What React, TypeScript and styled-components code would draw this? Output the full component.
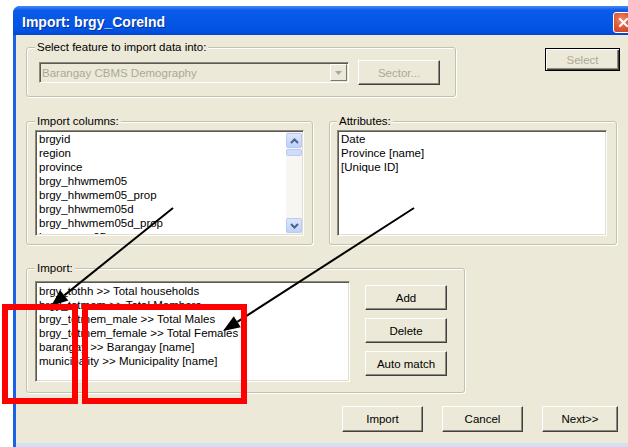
import React from 'react';
import styled, { createGlobalStyle, css } from 'styled-components';

const GlobalStyle = createGlobalStyle`
  html, body {
    margin: 0;
    padding: 0;
    background: #fff;
  }
  body {
    font-family: "Liberation Sans", Arial, sans-serif;
    font-size: 11.5px;
    overflow: hidden;
  }
`;

const Page = styled.div`
  position: relative;
  box-sizing: border-box;
  width: 628px;
  height: 447px;
  padding: 6px 0 0 13px;
  overflow: hidden;
`;

const Window = styled.div`
  width: 629px;
  height: 441px;
  display: flex;
  flex-direction: column;
  background: #1a62e6;
  border-radius: 7px 7px 0 0;
  overflow: hidden;
`;

const TitleBar = styled.div`
  box-sizing: border-box;
  height: 29px;
  flex: none;
  display: flex;
  align-items: center;
  justify-content: space-between;
  padding: 3px 8px 0 9px;
  background: linear-gradient(#4a8cf6 0, #0c5ce9 4px, #0757e7 50%, #0252e2 85%, #0046d4 100%);
`;

const Title = styled.span`
  font-size: 14px;
  font-weight: bold;
  color: #fff;
  text-shadow: 1px 1px 0 #0a2f9a;
`;

const CloseButton = styled.div`
  box-sizing: border-box;
  width: 21px;
  height: 21px;
  display: flex;
  align-items: center;
  justify-content: center;
  border: 1px solid #fff;
  border-radius: 3px;
  background: radial-gradient(circle at 40% 35%, #f08a6a 0, #e05a36 45%, #c53d1c 100%);
`;

const Client = styled.div`
  flex: 1;
  display: flex;
  flex-direction: column;
  margin: 0 3px;
  padding: 5px 19px 0 10px;
  background: #ece9d8;
  border-bottom: 4px solid #d3dff2;
`;

const Row = styled.div<{ $top?: number; $justify?: string }>`
  display: flex;
  align-items: flex-start;
  justify-content: ${p => p.$justify ?? 'flex-start'};
  margin-top: ${p => p.$top ?? 0}px;
`;

const Group = styled.fieldset<{ $w: number; $pad: string }>`
  box-sizing: border-box;
  width: ${p => p.$w}px;
  min-width: 0;
  margin: 0;
  padding: ${p => p.$pad};
  border: 1px solid #c4c1b0;
  border-radius: 3px;
  box-shadow: inset 1px 1px 0 #fff, 1px 1px 0 #fff;
`;

const Legend = styled.legend`
  padding: 0 2px;
  line-height: 14px;
  color: #000;
  background: #ece9d8;
`;

const Inline = styled.div<{ $indent?: number }>`
  display: flex;
  align-items: center;
  padding-left: ${p => p.$indent ?? 0}px;
`;

const ComboBox = styled.div`
  box-sizing: border-box;
  width: 310px;
  height: 21px;
  display: flex;
  align-items: center;
  justify-content: space-between;
  padding: 1px 1px 1px 2px;
  background: #ece9d8;
  border: 1px solid;
  border-color: #8d8a7d #fff #fff #8d8a7d;
  box-shadow: inset 1px 1px 0 #5a5950;
  color: #aca899;
`;

const ComboArrow = styled.div`
  box-sizing: border-box;
  width: 17px;
  height: 17px;
  display: flex;
  align-items: center;
  justify-content: center;
  border: 1px solid;
  border-color: #fff #7a786d #7a786d #fff;
`;

const Button = styled.button<{ $w: number; $h?: number; $default?: boolean }>`
  box-sizing: border-box;
  flex: none;
  width: ${p => p.$w}px;
  height: ${p => p.$h ?? 25}px;
  padding: 0;
  font: 11.5px "Liberation Sans", Arial, sans-serif;
  color: #000;
  background: #ece9d8;
  border: 1px solid;
  border-color: #fff #404040 #404040 #fff;
  box-shadow: inset -1px -1px 0 #8d8a7d;
  &:disabled {
    color: #aca899;
  }
  ${p =>
    p.$default &&
    css`
      border-color: #000;
      box-shadow: inset 1px 1px 0 #fff, inset -1px -1px 0 #404040, inset -2px -2px 0 #8d8a7d;
    `}
`;

const ListBox = styled.div<{ $w?: number; $h: number }>`
  box-sizing: border-box;
  display: flex;
  width: ${p => (p.$w ? `${p.$w}px` : '100%')};
  height: ${p => p.$h}px;
  flex: none;
  background: #fff;
  border: 1px solid;
  border-color: #8d8a7d #fff #fff #8d8a7d;
  box-shadow: inset 1px 1px 0 #5a5950, inset -1px -1px 0 #e2dfd0;
  padding: 1px;
`;

const ListItems = styled.div<{ $top?: number }>`
  flex: 1;
  overflow: hidden;
  padding: ${p => p.$top ?? 0}px 0 0 2px;
`;

const ListItem = styled.div`
  line-height: 14px;
  white-space: nowrap;
  color: #000;
`;

const ScrollBar = styled.div`
  width: 16px;
  display: flex;
  flex-direction: column;
  padding: 1px 0;
  background: #f7f6f1;
`;

const ScrollArrow = styled.div`
  box-sizing: border-box;
  height: 15px;
  display: flex;
  align-items: center;
  justify-content: center;
  border: 1px solid #b9cbf3;
  border-radius: 2px;
  background: linear-gradient(#dce6fd, #bfd1fa);
`;

const ScrollThumb = styled.div`
  box-sizing: border-box;
  height: 7px;
  margin-top: 1px;
  border: 1px solid #b9cbf3;
  border-radius: 2px;
  background: #cfdcfb;
`;

const ScrollSpace = styled.div`
  flex: 1;
`;

const ButtonColumn = styled.div`
  display: flex;
  flex-direction: column;
  gap: 8px;
  padding-top: 4px;
  margin-left: 15px;
`;

const Footer = styled.div`
  display: flex;
  justify-content: flex-end;
  gap: 19px;
  margin-top: 13px;
  padding-right: 2px;
`;

const Markup = styled.svg`
  position: absolute;
  top: 0;
  left: 0;
  pointer-events: none;
`;

const columns = [
  'brgyid',
  'region',
  'province',
  'brgy_hhwmem05',
  'brgy_hhwmem05_prop',
  'brgy_hhwmem05d',
  'brgy_hhwmem05d_prop',
  'brgy_mem05',
];

const attributes = ['Date', 'Province [name]', '[Unique ID]'];

const matches = [
  'brgy_tothh >> Total households',
  'brgy_totmem >> Total Members',
  'brgy_totmem_male >> Total Males',
  'brgy_totmem_female >> Total Females',
  'barangay >> Barangay [name]',
  'municipality >> Municipality [name]',
];

const Chevron = ({ up }: { up?: boolean }) => (
  <svg width="9" height="6" viewBox="0 0 9 6">
    <path
      d={up ? 'M1 5 L4.5 1.5 L8 5' : 'M1 1 L4.5 4.5 L8 1'}
      fill="none"
      stroke="#4d6185"
      strokeWidth="2"
    />
  </svg>
);

// arrow drawn from (x1,y1) to the tip (x2,y2) with a filled head
const Arrow = ({ x1, y1, x2, y2 }: { x1: number; y1: number; x2: number; y2: number }) => {
  const len = Math.hypot(x2 - x1, y2 - y1);
  const ux = (x2 - x1) / len;
  const uy = (y2 - y1) / len;
  const bx = x2 - ux * 17;
  const by = y2 - uy * 17;
  const hw = 6.5;
  const head = `${x2},${y2} ${bx - uy * hw},${by + ux * hw} ${bx + uy * hw},${by - ux * hw}`;
  return (
    <g>
      <line x1={x1} y1={y1} x2={bx} y2={by} stroke="#000" strokeWidth="2" />
      <polygon points={head} fill="#000" />
    </g>
  );
};

const App = () => {
  return (
    <>
      <GlobalStyle />
      <Page>
        <Window>
          <TitleBar>
            <Title>Import: brgy_CoreInd</Title>
            <CloseButton>
              <svg width="11" height="11" viewBox="0 0 11 11">
                <path d="M2 2 L9 9 M9 2 L2 9" stroke="#fff" strokeWidth="2.2" strokeLinecap="round" />
              </svg>
            </CloseButton>
          </TitleBar>
          <Client>
            <Row $justify="space-between">
              <Group $w={430} $pad="6px 8px 11px 8px">
                <Legend>Select feature to import data into:</Legend>
                <Inline $indent={4}>
                  <ComboBox>
                    <span>Barangay CBMS Demography</span>
                    <ComboArrow>
                      <svg width="7" height="4" viewBox="0 0 7 4">
                        <path d="M0 0 H7 L3.5 4 Z" fill="#aca899" />
                      </svg>
                    </ComboArrow>
                  </ComboBox>
                  <Button $w={82} $h={25} disabled style={{ marginLeft: 9 }}>
                    Sector...
                  </Button>
                </Inline>
              </Group>
              <Button $w={75} $h={23} $default disabled style={{ marginTop: 8 }}>
                Select
              </Button>
            </Row>

            <Row $top={17}>
              <Group $w={287} $pad="2px 8px 8px 8px">
                <Legend>Import columns:</Legend>
                <ListBox $h={106}>
                  <ListItems>
                    {columns.map(c => (
                      <ListItem key={c}>{c}</ListItem>
                    ))}
                  </ListItems>
                  <ScrollBar>
                    <ScrollArrow>
                      <Chevron up />
                    </ScrollArrow>
                    <ScrollThumb />
                    <ScrollSpace />
                    <ScrollArrow>
                      <Chevron />
                    </ScrollArrow>
                  </ScrollBar>
                </ListBox>
              </Group>
              <Group $w={288} $pad="2px 9px 8px 7px" style={{ marginLeft: 16 }}>
                <Legend>Attributes:</Legend>
                <ListBox $h={106}>
                  <ListItems>
                    {attributes.map(a => (
                      <ListItem key={a}>{a}</ListItem>
                    ))}
                  </ListItems>
                </ListBox>
              </Group>
            </Row>

            <Row $top={16}>
              <Group $w={439} $pad="6px 8px 10px 8px">
                <Legend>Import:</Legend>
                <Inline style={{ alignItems: 'flex-start' }}>
                  <ListBox $w={315} $h={101}>
                    <ListItems $top={1}>
                      {matches.map(m => (
                        <ListItem key={m}>{m}</ListItem>
                      ))}
                    </ListItems>
                  </ListBox>
                  <ButtonColumn>
                    <Button $w={82}>Add</Button>
                    <Button $w={82}>Delete</Button>
                    <Button $w={82}>Auto match</Button>
                  </ButtonColumn>
                </Inline>
              </Group>
            </Row>

            <Footer>
              <Button $w={81} $h={26}>Import</Button>
              <Button $w={81} $h={26}>Cancel</Button>
              <Button $w={76} $h={26}>Next&gt;&gt;</Button>
            </Footer>
          </Client>
        </Window>

        <Markup width="628" height="447" viewBox="0 0 628 447">
          <Arrow x1={173} y1={208} x2={51} y2={306} />
          <Arrow x1={414} y1={208} x2={223} y2={331} />
          <rect x="5" y="307" width="70" height="94" fill="none" stroke="#ff0000" strokeWidth="6" />
          <rect x="85" y="307" width="159" height="94" fill="none" stroke="#ff0000" strokeWidth="6" />
        </Markup>
      </Page>
    </>
  );
};

export default App;
